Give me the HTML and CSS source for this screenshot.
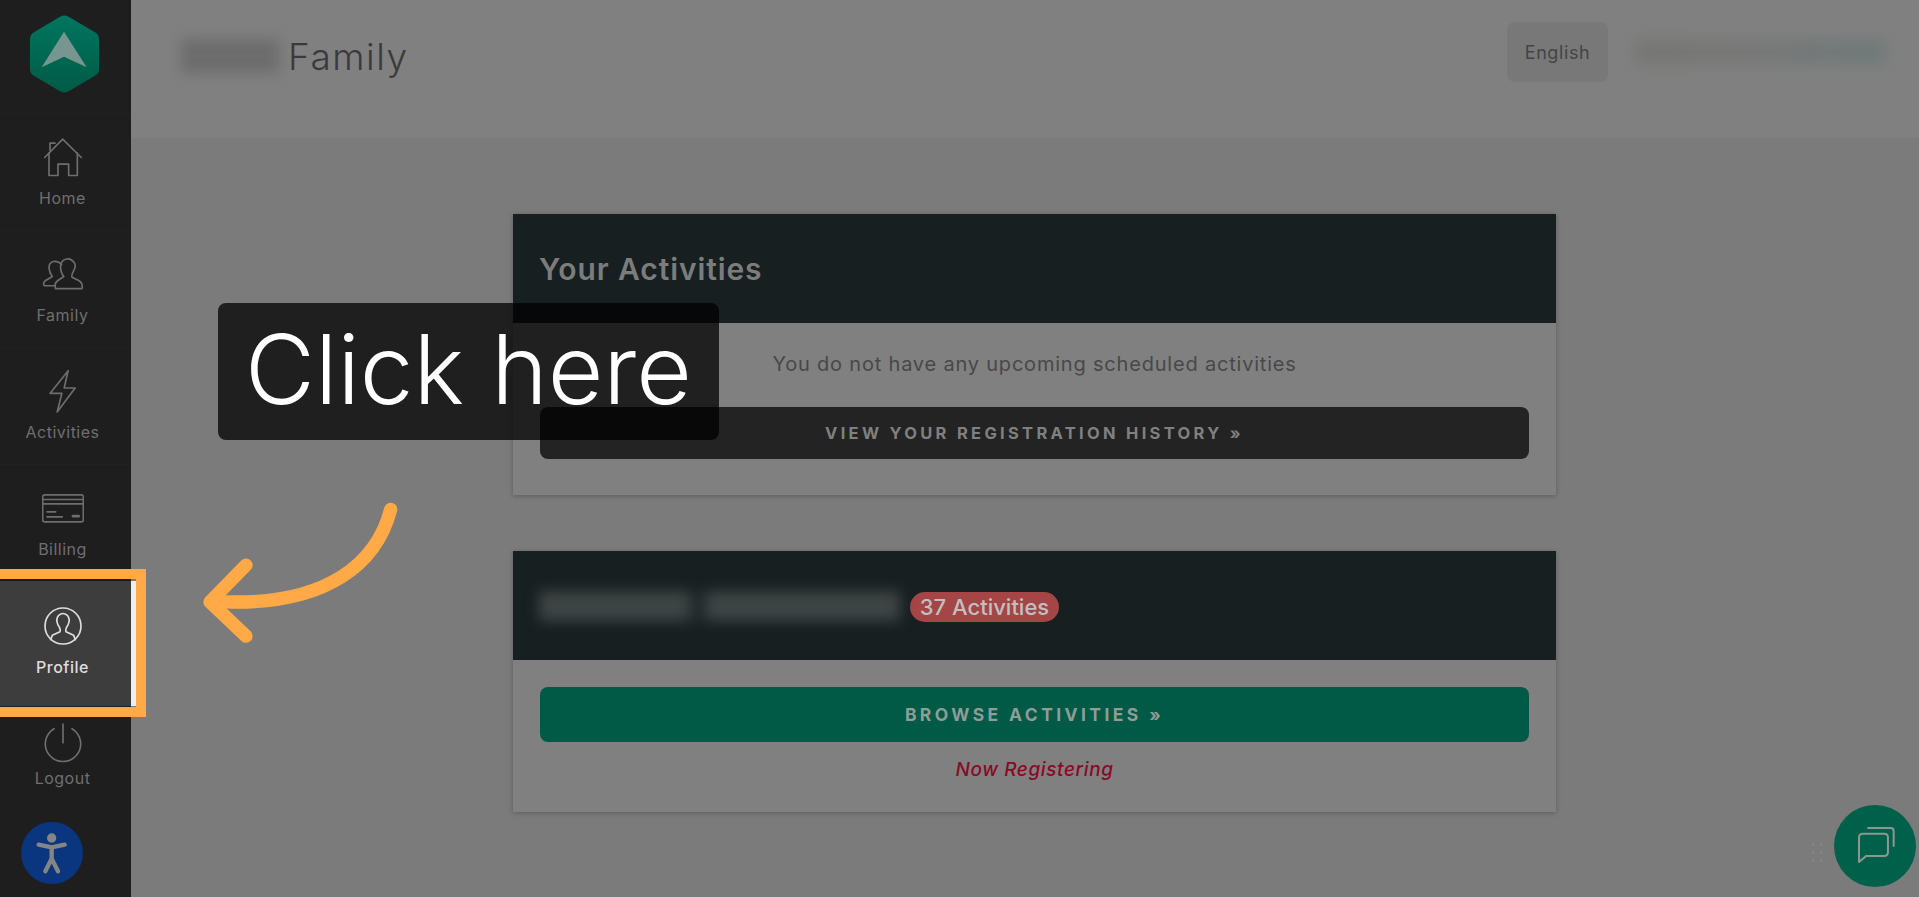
FILE: index.html
```html
<!DOCTYPE html>
<html lang="en">
<head>
  <meta charset="UTF-8" />
  <meta name="viewport" content="width=device-width, initial-scale=1" />
  <title>Family</title>
  <link rel="stylesheet" href="styles.css">
</head>
<body>

  <!-- Sidebar -->
  <aside class="sidebar">
    <div class="logo">
      <svg class="logo-mark" viewBox="90 45 207 233">
        <defs>
          <linearGradient id="hexFill" x1="0" y1="0" x2="0" y2="1">
            <stop offset="0" stop-color="#00755f" />
            <stop offset="1" stop-color="#005b46" />
          </linearGradient>
        </defs>
        <path d="M180 50 Q193 42 206 50 L285 96 Q297 103 297 116 L297 207 Q297 220 285 227 L206 273 Q193 281 180 273 L102 227 Q90 220 90 207 L90 116 Q90 103 102 96 Z" fill="url(#hexFill)" />
        <path d="M192 95 L260 201 L192 170 L125 201 Z" fill="#76968f" />
      </svg>
    </div>

    <nav class="nav">
      <a class="nav-item">
        <span class="nav-icon">
          <svg width="38" height="39" viewBox="130 410 114 116" class="line-icon">
            <path d="M132 468 L186 413 L242 468" />
            <path d="M145 455 L145 522 L172 522 L172 488 L204 488 L204 522 L230 522 L230 455" />
            <path d="M148 447 L148 425 L163 425" />
          </svg>
        </span>
        <span class="nav-label">Home</span>
      </a>
      <a class="nav-item">
        <span class="nav-icon">
          <svg width="42" height="33" viewBox="125 770 125 100" class="line-icon">
            <path d="M165 863 L245 863 Q249 846 235 838 L215 828 Q212 822 220 808 Q228 795 222 785 Q212 770 198 773 Q182 776 180 795 Q180 815 190 826 L172 838 Q160 846 165 863 Z" />
            <path d="M163 854 L131 854 Q125 845 135 838 L155 826 Q146 814 145 800 Q145 782 162 780 Q175 780 183 790" />
          </svg>
        </span>
        <span class="nav-label">Family</span>
      </a>
      <a class="nav-item">
        <span class="nav-icon">
          <svg width="27" height="45" viewBox="148 1105 80 135" class="line-icon">
            <path d="M205 1110 L151 1178 L186 1178 L172 1234 L226 1162 L193 1162 Z" />
          </svg>
        </span>
        <span class="nav-label">Activities</span>
      </a>
      <a class="nav-item">
        <span class="nav-icon">
          <svg width="42" height="29" viewBox="125 130 126 86" class="line-icon">
            <rect x="127" y="132" width="122" height="81" rx="6" />
            <path d="M127 146 L249 146 M127 159 L249 159 M140 183 L166 183 M140 198 L186 198" />
            <path d="M218 196 L235 196" stroke-width="8" />
          </svg>
        </span>
        <span class="nav-label">Billing</span>
      </a>
      <a class="nav-item nav-item-active">
        <span class="nav-icon">
          <svg width="38" height="38" viewBox="130 468 114 114" class="line-icon">
            <circle cx="187" cy="525" r="54" />
            <path d="M150 566 L155 553 L178 542 Q181 535 172 522 Q164 505 174 493 Q187 482 200 493 Q210 505 202 522 Q193 535 196 542 L219 553 L224 566" />
          </svg>
        </span>
        <span class="nav-label">Profile</span>
      </a>
      <a class="nav-item nav-item-logout">
        <span class="nav-icon">
          <svg width="38" height="40" viewBox="130 818 114 118" class="line-icon">
            <path d="M160 834 A53 53 0 1 0 214 834" />
            <path d="M187 820 L187 876" />
          </svg>
        </span>
        <span class="nav-label">Logout</span>
      </a>
    </nav>

    <div class="access-btn">
      <svg width="62" height="62" viewBox="63 1112 186 186">
        <circle cx="155" cy="1160" r="14" fill="#858585" />
        <path d="M116 1180 L155 1188 L194 1180 M155 1188 L155 1222 L136 1260 M155 1222 L174 1260" fill="none" stroke="#858585" stroke-width="13" stroke-linecap="round" stroke-linejoin="round" />
      </svg>
    </div>
  </aside>

  <main class="main">
    <header class="topbar">
      <div class="family-title">
        <div class="redact redact-name"></div>
        <h1>Family</h1>
      </div>
      <div class="topbar-right">
        <div class="lang-btn">English</div>
        <div class="redact redact-login"></div>
      </div>
    </header>

    <div class="content">
      <section class="card">
        <div class="card-head">
          <h2>Your Activities</h2>
        </div>
        <div class="card-body">
          <p class="empty-msg">You do not have any upcoming scheduled activities</p>
          <a class="btn btn-dark">VIEW YOUR REGISTRATION HISTORY »</a>
        </div>
      </section>

      <section class="card">
        <div class="card-head">
          <div class="redact redact-org"></div>
          <span class="badge">37 Activities</span>
        </div>
        <div class="card-body card-body-org">
          <a class="btn btn-green">BROWSE ACTIVITIES »</a>
          <p class="now-reg">Now Registering</p>
        </div>
      </section>
    </div>
  </main>

  <!-- Annotation on top of the page -->
  <div class="callout">Click here</div>
  <div class="highlight"></div>
  <svg class="arrow" width="200" height="147" viewBox="600 150 600 440">
    <path d="M1172 178 C1130 340 980 465 680 455" />
    <path d="M738 345 L630 455 L738 558" />
  </svg>

  <!-- Chat -->
  <div class="drag-dots"><i></i><i></i><i></i><i></i><i></i><i></i></div>
  <div class="chat-btn">
    <svg width="42" height="42" viewBox="225 140 125 125" fill="none" stroke="#8a9893" stroke-width="6" stroke-linejoin="round">
      <path d="M240 250 L240 177 Q240 166 251 166 L315 166 Q326 166 326 177 L326 221 Q326 232 315 232 L261 232 Z" />
      <path d="M265 149 L334 149 Q343 149 343 158 L343 205" />
    </svg>
  </div>

</body>
</html>
```

FILE: styles.css
```css
* {
  box-sizing: border-box;
}

html, body {
  height: 100%;
}

body {
  margin: 0;
  height: 897px;
  display: flex;
  overflow: hidden;
  background: #7b7b7b;
  font-family: Inter, "Open Sans", sans-serif;
}

/* Sidebar */
.sidebar {
  width: 131px;
  flex-shrink: 0;
  background: #1e1e1e;
  display: flex;
  flex-direction: column;
  align-items: stretch;
}

.logo {
  height: 113px;
  padding: 15px 0 0 30px;
}

.logo-mark {
  display: block;
  width: 69px;
  height: 78px;
}

.nav-item {
  height: 117px;
  padding: 19px 6px 0 0;
  display: flex;
  flex-direction: column;
  align-items: center;
  color: #6f6f6f;
  border-top: 1px solid #212121;
}

.nav-icon {
  height: 48px;
  display: flex;
  align-items: center;
  justify-content: center;
}

.nav-label {
  margin-top: 7px;
  font-size: 16px;
  line-height: 20px;
  letter-spacing: 0.5px;
}

.line-icon {
  fill: none;
  stroke: #6e6e6e;
  stroke-width: 5;
  stroke-linejoin: round;
  stroke-linecap: round;
}

.nav-item-active {
  height: 125px;
  width: 136px;
  padding: 21px 6px 0 0;
  background: #3d3d3d;
  color: #dedede;
  border-right: 5px solid #eeeeee;
  border-top: 0;
  font-weight: 500;
}

.nav-item-active .line-icon {
  stroke: #dedede;
}

.nav-item-logout {
  height: 105px;
  padding-top: 13px;
  border-top: 0;
}

.nav-item-logout .nav-label {
  margin-top: 1px;
}

.access-btn {
  width: 62px;
  height: 62px;
  margin: 11px 0 0 21px;
  border-radius: 50%;
  background: #0a367f;
}

/* Top bar */
.main {
  flex: 1;
  min-width: 0;
}

.topbar {
  height: 138px;
  background: #808080;
  padding: 22px 34px 0 50px;
  display: flex;
  justify-content: space-between;
  align-items: flex-start;
}

.family-title {
  display: flex;
  align-items: center;
  gap: 9px;
  height: 68px;
}

.family-title h1 {
  margin: 0;
  font-size: 37px;
  font-weight: 300;
  letter-spacing: 1.5px;
  color: #3a3a3a;
}

.topbar-right {
  display: flex;
  align-items: center;
  gap: 28px;
}

.lang-btn {
  width: 101px;
  height: 60px;
  background: #787878;
  border-radius: 8px;
  display: flex;
  align-items: center;
  justify-content: center;
  font-size: 18px;
  letter-spacing: 0.6px;
  color: #444444;
}

.redact {
  filter: blur(7px);
}

.redact-name {
  width: 98px;
  height: 34px;
  background: #6c6c6c;
}

.redact-login {
  width: 249px;
  height: 24px;
  background: linear-gradient(90deg, #767673, #777777 45%, #6f7a78);
}

.redact-org {
  width: 361px;
  height: 30px;
  background: linear-gradient(90deg, #3f4545 41%, #1c2426 43%, #1c2426 45%, #3f4545 47%);
}

/* Cards */
.content {
  padding: 76px 0 0 382px;
  display: flex;
  flex-direction: column;
  gap: 56px;
}

.card {
  width: 1043px;
  background: #808080;
  box-shadow: 0 1px 5px rgba(0, 0, 0, 0.25);
}

.card-head {
  height: 109px;
  background: #171f21;
  padding-left: 26px;
  display: flex;
  align-items: center;
  gap: 10px;
}

.card-head h2 {
  margin: 0;
  font-size: 30px;
  font-weight: 600;
  letter-spacing: 0.9px;
  color: #7c7c7c;
}

.card-body {
  height: 172px;
  padding: 29px 27px 0;
  text-align: center;
}

.card-body-org {
  height: 152px;
  padding-top: 27px;
}

.empty-msg {
  margin: 0 0 30px;
  height: 25px;
  line-height: 25px;
  font-size: 20px;
  letter-spacing: 0.8px;
  color: #484848;
}

.btn {
  display: flex;
  align-items: center;
  justify-content: center;
  border-radius: 8px;
  font-weight: 700;
  font-size: 16.5px;
  letter-spacing: 3.3px;
}

.btn-dark {
  height: 52px;
  background: #232323;
  color: #808080;
}

.btn-green {
  height: 55px;
  font-size: 17.5px;
  letter-spacing: 3.4px;
  background: #005a45;
  color: #8f9c97;
}

.now-reg {
  margin: 17px 0 0;
  font-size: 19px;
  line-height: 22px;
  font-style: italic;
  font-weight: 500;
  letter-spacing: 0.6px;
  color: #8a0a26;
}

.badge {
  width: 149px;
  height: 30px;
  margin-top: 3px;
  background: #a54545;
  border-radius: 15px;
  display: flex;
  align-items: center;
  justify-content: center;
  font-size: 22px;
  font-weight: 500;
  color: #c0c0c0;
}

/* Annotation */
.callout {
  position: absolute;
  left: 218px;
  top: 303px;
  width: 501px;
  height: 137px;
  padding-bottom: 6px;
  background: rgba(0, 0, 0, 0.75);
  border-radius: 8px;
  display: flex;
  align-items: center;
  justify-content: center;
  color: #ffffff;
  font-size: 96px;
  font-weight: 300;
}

.highlight {
  position: absolute;
  left: -12px;
  top: 569px;
  width: 158px;
  height: 148px;
  border: 10px solid #ffaa47;
}

.arrow {
  position: absolute;
  left: 200px;
  top: 500px;
  fill: none;
  stroke: #ffaa47;
  stroke-width: 40;
  stroke-linecap: round;
  stroke-linejoin: round;
}

/* Chat */
.chat-btn {
  position: absolute;
  left: 1834px;
  top: 805px;
  width: 82px;
  height: 82px;
  border-radius: 50%;
  background: #00604a;
  display: flex;
  align-items: center;
  justify-content: center;
}

.drag-dots {
  position: absolute;
  left: 1812px;
  top: 843px;
  width: 11px;
  display: grid;
  grid-template-columns: 3px 3px;
  justify-content: space-between;
  gap: 5px 0;
}

.drag-dots i {
  height: 3px;
  background: #868686;
  border-radius: 50%;
}
```
